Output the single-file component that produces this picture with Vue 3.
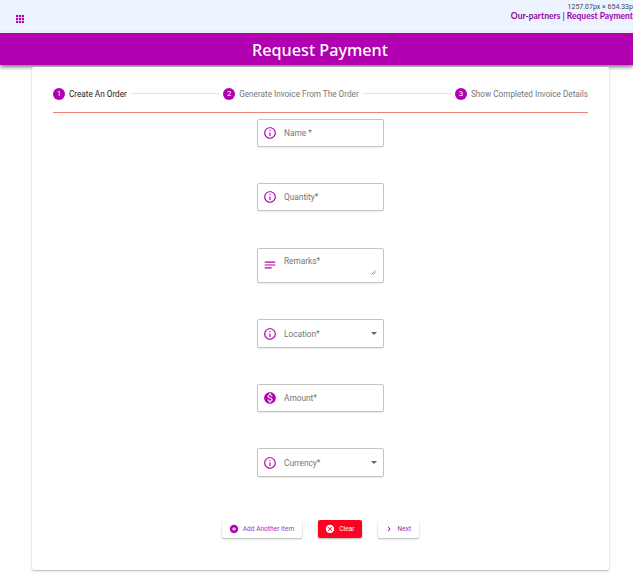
<script setup>
const steps = [
  { n: 1, label: 'Create An Order', active: true },
  { n: 2, label: 'Generate Invoice From The Order' },
  { n: 3, label: 'Show Completed Invoice Details' }
]
const fields = [
  { label: 'Name *', icon: 'info' },
  { label: 'Quantity*', icon: 'info' },
  { label: 'Remarks*', icon: 'lines', area: true },
  { label: 'Location*', icon: 'info', select: true },
  { label: 'Amount*', icon: 'dollar' },
  { label: 'Currency*', icon: 'info', select: true }
]
</script>

<template>
  <div class="page">
    <header class="topbar">
      <svg class="apps" viewBox="0 0 8 8" width="8" height="8">
        <g fill="#b000b0">
          <template v-for="x in [0, 3, 6]" :key="x">
            <rect v-for="y in [0, 3, 6]" :key="y" :x="x" :y="y" width="2.200" height="2.200" />
          </template>
        </g>
      </svg>
      <div class="crumbs"><span class="crumb-first">Our-partners</span> | <span class="crumb-link">Request Payment</span></div>
      <div class="size-tip">1257.07px × 654.33p</div>
    </header>
    <div class="banner">Request Payment</div>
    <main class="card">
      <div class="stepper">
        <template v-for="(s, i) in steps" :key="s.n">
          <div class="step">
            <span class="badge">{{ s.n }}</span>
            <span class="step-label" :class="{ active: s.active }">{{ s.label }}</span>
          </div>
          <div v-if="i < steps.length - 1" class="connector"></div>
        </template>
      </div>
      <form class="form" @submit.prevent>
        <div v-for="f in fields" :key="f.label" class="field" :class="{ area: f.area }">
          <svg v-if="f.icon === 'info'" class="ficon" viewBox="0 0 24 24" width="14" height="14">
            <path fill="#b000b0" d="M11 7h2v2h-2zm0 4h2v6h-2zm1-9C6.480 2 2 6.480 2 12s4.480 10 10 10 10-4.480 10-10S17.520 2 12 2zm0 18c-4.410 0-8-3.590-8-8s3.590-8 8-8 8 3.590 8 8-3.590 8-8 8z" />
          </svg>
          <svg v-else-if="f.icon === 'lines'" class="ficon" viewBox="0 0 24 24" width="14" height="14">
            <path fill="#b000b0" d="M3 18h12v-2H3v2zM3 6v2h18V6H3zm0 7h18v-2H3v2z" />
          </svg>
          <svg v-else class="ficon" viewBox="0 0 24 24" width="14" height="14">
            <path fill="#b000b0" d="M12 2C6.480 2 2 6.480 2 12s4.480 10 10 10 10-4.480 10-10S17.520 2 12 2zm1.410 16.090V20h-2.670v-1.930c-1.710-.36-3.160-1.460-3.270-3.400h1.960c.1 1.050.82 1.870 2.650 1.870 1.960 0 2.400-.98 2.400-1.590 0-.83-.44-1.610-2.670-2.140-2.480-.6-4.180-1.620-4.180-3.670 0-1.720 1.390-2.840 3.110-3.210V4h2.670v1.950c1.860.45 2.790 1.860 2.850 3.390H14.300c-.05-1.110-.64-1.870-2.220-1.870-1.500 0-2.400.68-2.400 1.640 0 .84.650 1.390 2.670 1.910s4.180 1.390 4.180 3.910c-.01 1.830-1.380 2.830-3.120 3.160z" />
          </svg>
          <span class="flabel" :class="{ raised: f.area }">{{ f.label }}</span>
          <span v-if="f.select" class="caret"></span>
          <svg v-if="f.area" class="resize" viewBox="0 0 6 6" width="5" height="5">
            <path d="M5.500 0.500 0.500 5.500M5.500 3 3 5.500" stroke="#666" stroke-width="0.800" fill="none" />
          </svg>
        </div>
      </form>
      <div class="actions">
        <button type="button" class="btn plain">
          <svg viewBox="0 0 24 24" width="10" height="10"><path fill="#b000b0" d="M12 2C6.480 2 2 6.480 2 12s4.480 10 10 10 10-4.480 10-10S17.520 2 12 2zm5 11h-4v4h-2v-4H7v-2h4V7h2v4h4v2z" /></svg>
          Add Another Item
        </button>
        <button type="button" class="btn red">
          <svg viewBox="0 0 24 24" width="10" height="10"><path fill="#fff" d="M12 2C6.470 2 2 6.470 2 12s4.470 10 10 10 10-4.470 10-10S17.530 2 12 2zm5 13.590L15.590 17 12 13.410 8.410 17 7 15.590 10.590 12 7 8.410 8.410 7 12 10.590 15.590 7 17 8.410 13.410 12 17 15.590z" /></svg>
          Clear
        </button>
        <button type="button" class="btn plain next">
          <svg viewBox="0 0 24 24" width="10" height="10"><path fill="#b000b0" d="M8.590 16.590 13.170 12 8.590 7.410 10 6l6 6-6 6z" /></svg>
          Next
        </button>
      </div>
    </main>
  </div>
</template>

<style scoped>
.page {
  width: 633px;
  height: 573px;
  overflow: hidden;
  background: #fff;
  font-family: Roboto, "Liberation Sans", sans-serif;
}
.topbar {
  position: relative;
  height: 32px;
  background: #edf4ff;
  display: flex;
  align-items: center;
  padding-left: 16px;
  box-sizing: border-box;
}
.apps { margin-top: 6px; }
.crumbs {
  white-space: nowrap;
  font-family: Lato, sans-serif;
  font-weight: 700;
  font-size: 8.500px;
  color: #6a2a90;
  position: absolute;
  right: 0;
  top: 11px;
  line-height: 11px;
}
.crumb-link { color: #a000a8; }
.crumb-first { color: #8a0a9a; }
.size-tip {
  position: absolute;
  right: 0;
  top: 2px;
  white-space: nowrap;
  font-size: 7px;
  line-height: 10px;
  color: #444;
}
.banner {
  position: relative;
  margin-top: 1px;
  height: 32px;
  padding-left: 7px;
  background: #b000b0;
  color: #fff;
  text-align: center;
  font-family: "Noto Sans", sans-serif;
  font-weight: 500;
  font-size: 16.200px;
  line-height: 34px;
  box-shadow: 0 2px 4px rgba(0, 0, 0, .55);
}
.card {
  position: relative;
  width: 577px;
  height: 503px;
  margin: 2px 0 0 32px;
  padding: 0 21px;
  box-sizing: border-box;
  background: #fff;
  box-shadow: 0 1px 2px rgba(0, 0, 0, .3);
  border-radius: 2px;
}
.stepper {
  height: 46px;
  display: flex;
  align-items: center;
  padding-top: 8px;
  box-sizing: border-box;
  border-bottom: 1px solid #f08078;
}
.step { display: flex; align-items: center; gap: 4px; white-space: nowrap; }
.badge {
  width: 12px;
  height: 12px;
  border-radius: 50%;
  background: #b000b0;
  color: #fff;
  font-size: 8px;
  line-height: 12px;
  text-align: center;
}
.step-label { font-size: 8.200px; color: #767676; }
.step-label.active { color: #222; }
.connector {
  flex: 1;
  height: 1px;
  background: #e4e4e4;
  margin: 0 4px;
}
.form {
  display: flex;
  flex-direction: column;
  align-items: center;
  gap: 36.100px;
  padding-top: 5.600px;
}
.field {
  position: relative;
  width: 127px;
  height: 28.400px;
  box-sizing: border-box;
  border: 1px solid #c4c4c4;
  border-radius: 2px;
  box-shadow: 0 1px 1px rgba(0, 0, 0, .08);
  display: flex;
  align-items: center;
  padding-left: 5px;
  gap: 7px;
  background: #fff;
}
.field.area { height: 35.700px; }
.flabel { font-size: 8.300px; color: #757575; }
.flabel.raised { margin-top: -8px; }
.caret {
  position: absolute;
  right: 6px;
  top: 12px;
  border-left: 3px solid transparent;
  border-right: 3px solid transparent;
  border-top: 3px solid #666;
}
.resize { position: absolute; right: 7px; bottom: 7px; }
.actions {
  display: flex;
  justify-content: center;
  gap: 16px;
  margin-top: 43.200px;
}
.btn {
  height: 18px;
  border: none;
  border-radius: 2px;
  display: flex;
  align-items: center;
  gap: 4px;
  padding: 0 8px 0 7px;
  font-family: Roboto, sans-serif;
  font-size: 6.600px;
  box-shadow: 0 1px 2px rgba(0, 0, 0, .3);
}
.plain { background: #fff; color: #a030c0; }
.red { background: #ff0022; color: #fff; }
.next { gap: 3.600px; padding-left: 5.500px; }
</style>
